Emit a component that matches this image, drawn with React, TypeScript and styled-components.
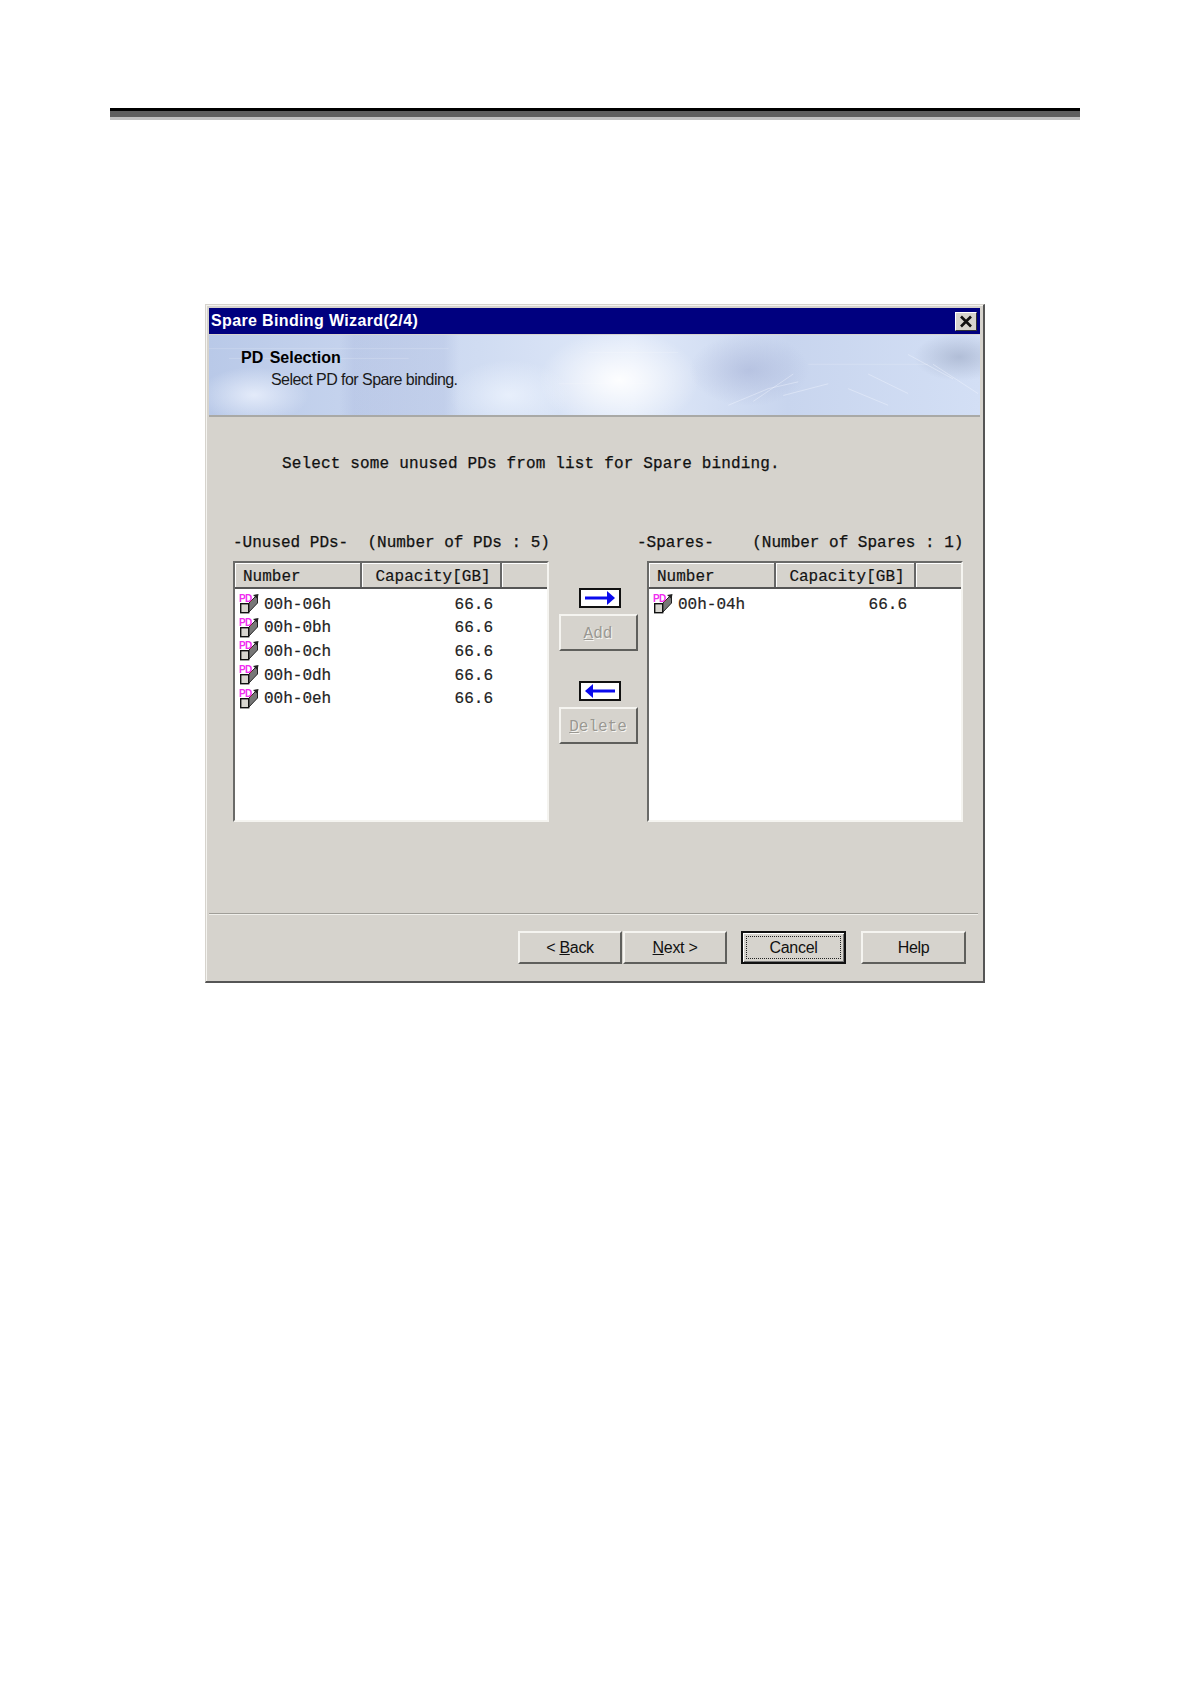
import React from "react";
import styled, { createGlobalStyle } from "styled-components";

const Global = createGlobalStyle`
  html, body { margin: 0; padding: 0; background: #fff; }
  * { box-sizing: border-box; }
`;

const mono = `"Liberation Mono", "Courier New", monospace`;
const sans = `"Liberation Sans", Arial, sans-serif`;
const face = "#d6d3cd";

const Page = styled.div`
  width: 1190px;
  height: 1684px;
  padding-top: 108px;
  overflow: hidden;
`;
const Rule = styled.div`
  width: 970px;
  height: 12px;
  margin-left: 110px;
  background: linear-gradient(#000 0 3px, #5e5e5e 3px 9px, #c0c0c0 9px 12px);
`;
const Dialog = styled.div`
  width: 780px;
  height: 679px;
  margin: 184px 0 0 205px;
  padding: 3px;
  background: ${face};
  border: 1px solid ${face};
  border-right: 2px solid #555;
  border-bottom: 2px solid #555;
  box-shadow: inset 1px 1px 0 #f4f3ef;
  display: flex;
  flex-direction: column;
`;
const TitleBar = styled.div`
  height: 26px;
  flex: none;
  background: #00007f;
  color: #fff;
  font: bold 16px ${sans};
  letter-spacing: 0.36px;
  padding: 0 3px 0 2px;
  display: flex;
  align-items: center;
  justify-content: space-between;
`;
const CloseBox = styled.div`
  width: 22px;
  height: 19px;
  background: ${face};
  border: 1px solid;
  border-color: #fff #333 #333 #fff;
  display: flex;
  align-items: center;
  justify-content: center;
`;
const Banner = styled.div`
  position: relative;
  height: 82px;
  flex: none;
  margin-top: 1px;
  border-bottom: 2px solid #a9a9a6;
  padding: 13px 0 0 32px;
  color: #000;
  overflow: hidden;
  background:
    radial-gradient(ellipse 55px 28px at 45px 60px, rgba(240,245,255,.75), transparent),
    radial-gradient(ellipse 80px 50px at 410px 45px, rgba(255,255,255,.95), transparent),
    radial-gradient(ellipse 60px 35px at 300px 60px, rgba(240,246,255,.7), transparent),
    radial-gradient(ellipse 60px 36px at 540px 35px, rgba(160,172,210,.5), transparent),
    radial-gradient(ellipse 45px 24px at 750px 22px, rgba(155,168,195,.6), transparent),
    linear-gradient(90deg, transparent 130px, rgba(150,165,210,.2) 145px, rgba(150,165,210,.2) 235px, transparent 250px),
    linear-gradient(90deg, #b9c9e8, #d0dcf2 35%, #e0e9f9 55%, #c8d5ee 75%, #d3dff5);
`;
const BannerArt = styled.svg`
  position: absolute;
  inset: 0;
  width: 100%;
  height: 100%;
`;
const BannerTitle = styled.div`
  position: relative;
  font: bold 16px ${sans};
  line-height: 19px;
  word-spacing: 2px;
`;
const BannerSub = styled.div`
  position: relative;
  font: 16px ${sans};
  line-height: 22px;
  margin: 2px 0 0 30px;
  letter-spacing: -0.55px;
  color: #1a1a1a;
`;
const Instruction = styled.div`
  font: 16px ${mono};
  letter-spacing: 0.16px;
  line-height: 20px;
  white-space: pre;
  color: #111;
  -webkit-text-stroke: 0.25px #111;
  margin: 37px 0 0 73px;
`;
const Labels = styled.div`
  display: flex;
  margin: 59px 0 0 24px;
  font: 16px ${mono};
  line-height: 20px;
  color: #111;
  -webkit-text-stroke: 0.25px #111;
  white-space: pre;
`;
const Label = styled.div<{ $w?: number }>`
  width: ${(p) => (p.$w ? `${p.$w}px` : "auto")};
`;
const Lists = styled.div`
  display: grid;
  grid-template-columns: 316px 98px 316px;
  margin: 8px 0 0 24px;
`;
const ListBox = styled.div`
  height: 261px;
  background: #fff;
  border: 2px solid;
  border-color: #6a6a68 #f5f4f0 #f5f4f0 #6a6a68;
  display: flex;
  flex-direction: column;
  font: 16px ${mono};
  color: #222;
  -webkit-text-stroke: 0.2px #222;
`;
const ListHead = styled.div`
  display: grid;
  grid-template-columns: 127px 140px 1fr;
  height: 26px;
  flex: none;
  background: ${face};
  border-bottom: 2px solid #555;
`;
const HeadCell = styled.div<{ $center?: boolean }>`
  display: flex;
  align-items: center;
  justify-content: ${(p) => (p.$center ? "center" : "flex-start")};
  padding-left: ${(p) => (p.$center ? "4px" : "8px")};
  padding-top: 4px;
  border-right: 2px solid #666;
  box-shadow: inset 1px 1px 0 #fff;
  color: #111;
  &:last-child { border-right: none; }
`;
const Rows = styled.div`
  padding-top: 4px;
`;
const Row = styled.div`
  display: grid;
  grid-template-columns: 25px 100px 129px;
  align-items: center;
  height: 23.6px;
  padding-left: 4px;
  svg { margin-top: -2px; }
`;
const RowValue = styled.div`
  text-align: right;
`;
const Mid = styled.div`
  display: flex;
  flex-direction: column;
  align-items: center;
  padding: 27px 0 0 0;
`;
const ArrowBox = styled.div`
  width: 42px;
  height: 20px;
  margin-left: 4px;
  background: #fff;
  border: 2px solid #111;
  display: flex;
  align-items: center;
  justify-content: center;
`;
const SideButton = styled.div<{ $gap: number }>`
  width: 79px;
  height: 37px;
  margin: 6px 0 ${(p) => p.$gap}px;
  padding-top: 2px;
  display: flex;
  align-items: center;
  justify-content: center;
  background: ${face};
  border: 2px solid;
  border-color: #f5f4f0 #5f5f5c #5f5f5c #f5f4f0;
  font: 16px ${mono};
  color: #9a9892;
  text-shadow: 1px 1px 0 #f7f6f3;
  u { text-decoration: underline; }
`;
const Footer = styled.div`
  margin-top: auto;
  border-top: 1px solid #a09e98;
  box-shadow: inset 0 1px 0 #f0efeb;
  margin-right: 2px;
  height: 65px;
  padding: 17px 0 0 309px;
  display: flex;
`;
const WizButton = styled.div<{ $def?: boolean; $mr?: number; $w?: number }>`
  position: relative;
  width: ${(p) => p.$w ?? 104}px;
  height: 33px;
  margin-right: ${(p) => p.$mr ?? 0}px;
  display: flex;
  align-items: center;
  justify-content: center;
  background: ${face};
  font: 16px ${sans};
  letter-spacing: -0.3px;
  color: #111;
  border: 2px solid ${(p) => (p.$def ? "#111" : "transparent")};
  ${(p) => (p.$def ? "" : "border-color: #f5f4f0 #5f5f5c #5f5f5c #f5f4f0;")}
  box-shadow: ${(p) => (p.$def ? "inset 1px 1px 0 #fff, inset -1px -1px 0 #777" : "none")};
`;
const Focus = styled.span`
  position: absolute;
  inset: 3px;
  border: 1px dotted #222;
`;

const PdIcon = () => (
  <svg width="20" height="21" viewBox="0 0 20 21" aria-hidden="true">
    <polygon points="9,11 17,3 18.5,3 18.5,10 9,20" fill="#777" stroke="#222" strokeWidth="1" />
    <polygon points="14,2 19.5,1 18.5,6" fill="#222" />
    <rect x="1.7" y="10.7" width="8" height="9" fill="#d8d6d0" stroke="#111" strokeWidth="1.4" />
    <text x="0" y="8.5" fontFamily="Liberation Sans, sans-serif" fontWeight="700" fontSize="10" fill="#f02cf0" stroke="none" letterSpacing="-0.6">PD</text>
  </svg>
);

const Arrow = ({ left }: { left?: boolean }) => (
  <svg width="34" height="16" viewBox="0 0 34 16" aria-hidden="true" style={{ transform: left ? "scaleX(-1)" : undefined }}>
    <rect x="2" y="6.5" width="25" height="3" fill="#0a0aee" />
    <polygon points="24,1 32,8 24,15" fill="#0a0aee" />
  </svg>
);

const Close = () => (
  <svg width="14" height="13" viewBox="0 0 14 13" aria-hidden="true">
    <path d="M2 1.5 L12 11.5 M12 1.5 L2 11.5" stroke="#111" strokeWidth="2.6" />
  </svg>
);

function PdList({ items }: { items: string[] }) {
  return (
    <ListBox>
      <ListHead>
        <HeadCell>Number</HeadCell>
        <HeadCell $center>Capacity[GB]</HeadCell>
        <HeadCell />
      </ListHead>
      <Rows>
        {items.map((n) => (
          <Row key={n}>
            <PdIcon />
            <div>{n}</div>
            <RowValue>66.6</RowValue>
          </Row>
        ))}
      </Rows>
    </ListBox>
  );
}

export default function App() {
  return (
    <Page>
      <Global />
      <Rule />
      <Dialog>
        <TitleBar>
          <span>Spare Binding Wizard(2/4)</span>
          <CloseBox><Close /></CloseBox>
        </TitleBar>
        <Banner>
          <BannerArt viewBox="0 0 772 82" preserveAspectRatio="none" aria-hidden="true">
            <g stroke="#f4f8ff" strokeWidth="1" fill="none" opacity="0.4">
              <path d="M520 72 L560 55 L590 48 M545 68 L585 40 M575 62 L620 50 M640 55 L680 72 M660 40 L700 60 M725 30 L770 60 M700 20 L745 45" />
            </g>
            <g stroke="#fff" strokeWidth="1" opacity="0.18" fill="none">
              <path d="M0 14 H240 M20 24 H200 M380 18 H470 M350 50 H440 M600 30 H720" />
            </g>
          </BannerArt>
          <BannerTitle>PD Selection</BannerTitle>
          <BannerSub>Select PD for Spare binding.</BannerSub>
        </Banner>
        <Instruction>Select some unused PDs from list for Spare binding.</Instruction>
        <Labels>
          <Label $w={404}>{"-Unused PDs-  (Number of PDs : 5)"}</Label>
          <Label>{"-Spares-    (Number of Spares : 1)"}</Label>
        </Labels>
        <Lists>
          <PdList items={["00h-06h", "00h-0bh", "00h-0ch", "00h-0dh", "00h-0eh"]} />
          <Mid>
            <ArrowBox><Arrow /></ArrowBox>
            <SideButton $gap={30}><span><u>A</u>dd</span></SideButton>
            <ArrowBox><Arrow left /></ArrowBox>
            <SideButton $gap={0}><span><u>D</u>elete</span></SideButton>
          </Mid>
          <PdList items={["00h-04h"]} />
        </Lists>
        <Footer>
          <WizButton $mr={1}><span>&lt; <u>B</u>ack</span></WizButton>
          <WizButton $mr={14}><span><u>N</u>ext &gt;</span></WizButton>
          <WizButton $def $w={105} $mr={15}><Focus />Cancel</WizButton>
          <WizButton $w={105}>Help</WizButton>
        </Footer>
      </Dialog>
    </Page>
  );
}
